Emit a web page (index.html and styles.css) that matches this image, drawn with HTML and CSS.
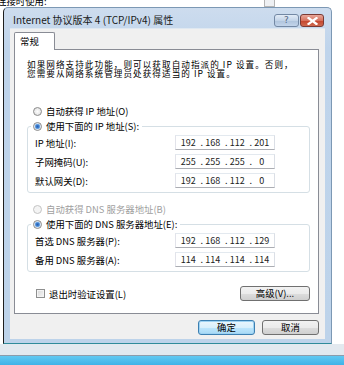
FILE: index.html
```html
<!DOCTYPE html>
<html lang="zh-CN">
<head>
    <meta charset="UTF-8">
    <meta name="viewport" content="width=device-width, initial-scale=1.0">
    <title>Internet 协议版本 4 (TCP/IPv4) 属性</title>
    <link rel="stylesheet" href="styles.css">
</head>
<body>
    <div class="desk">
        <!-- janela atrás do diálogo -->
        <span class="behind-text">连接时使用:</span>
        <span class="behind-scroll"></span>

        <div class="dialog">
            <div class="titlebar">
                <span class="title">Internet 协议版本 4 (TCP/IPv4) 属性</span>
                <div class="caption-btns">
                    <span class="cap-btn help">?</span>
                    <span class="cap-btn close">
                        <svg width="11" height="8" viewBox="0 0 11 8">
                            <path d="M1.5 1 L9.5 7 M9.5 1 L1.5 7" stroke="#fff" stroke-width="2.2" stroke-linecap="square"/>
                        </svg>
                    </span>
                </div>
            </div>

            <div class="client">
                <div class="tabs"><span class="tab">常规</span></div>

                <div class="panel">
                    <p class="intro">如果网络支持此功能，则可以获取自动指派的 IP 设置。否则，<br>您需要从网络系统管理员处获得适当的 IP 设置。</p>

                    <div class="option"><span class="radio"></span>自动获得 IP 地址(O)</div>

                    <fieldset class="group">
                        <legend><span class="radio on"></span>使用下面的 IP 地址(S):</legend>
                        <div class="field">
                            <span>IP 地址(I):</span>
                            <div class="ipbox"><span>192</span><span>168</span><span>112</span><span>201</span></div>
                        </div>
                        <div class="field">
                            <span>子网掩码(U):</span>
                            <div class="ipbox"><span>255</span><span>255</span><span>255</span><span>0</span></div>
                        </div>
                        <div class="field">
                            <span>默认网关(D):</span>
                            <div class="ipbox"><span>192</span><span>168</span><span>112</span><span>0</span></div>
                        </div>
                    </fieldset>

                    <div class="option disabled"><span class="radio off"></span>自动获得 DNS 服务器地址(B)</div>

                    <fieldset class="group dns">
                        <legend><span class="radio on"></span>使用下面的 DNS 服务器地址(E):</legend>
                        <div class="field">
                            <span>首选 DNS 服务器(P):</span>
                            <div class="ipbox"><span>192</span><span>168</span><span>112</span><span>129</span></div>
                        </div>
                        <div class="field">
                            <span>备用 DNS 服务器(A):</span>
                            <div class="ipbox"><span>114</span><span>114</span><span>114</span><span>114</span></div>
                        </div>
                    </fieldset>

                    <div class="bottom-row">
                        <label class="check"><span class="checkbox"></span>退出时验证设置(L)</label>
                        <button class="btn advanced">高级(V)...</button>
                    </div>
                </div>

                <div class="dlg-btns">
                    <button class="btn default">确定</button>
                    <button class="btn">取消</button>
                </div>
            </div>
        </div>

        <div class="strip"></div>
        <div class="taskbar"></div>
    </div>
</body>
</html>
```

FILE: styles.css
```css
body {
    margin: 0;
    font-family: "Noto Sans CJK SC", "Noto Sans", sans-serif;
    font-size: 9.4px;
    color: #000;
    background: #fff;
}

.desk {
    position: relative;
    width: 344px;
    height: 365px;
    overflow: hidden;
    background: #fff;
}

.behind-text {
    position: absolute;
    left: -3px;
    top: -4px;
    line-height: 10px;
}

.behind-scroll {
    position: absolute;
    left: 264px;
    top: 0;
    width: 9px;
    height: 6px;
    border: 1px solid #b4b4b4;
    border-top: none;
    background: #eef0f3;
}

/* janela do diálogo */
.dialog {
    position: absolute;
    left: 3px;
    top: 7px;
    width: 329px;
    height: 337px;
    box-sizing: border-box;
    border: 1px solid #7c98b4;
    border-left-color: #1e1e1e;
    border-bottom-color: #2f8b9a;
    border-radius: 5px 5px 0 0;
    background: linear-gradient(#cddcee, #bfd4eb 40px, #bdd3ea);
    display: flex;
    flex-direction: column;
}

.titlebar {
    height: 21px;
    padding: 3px 7px 0 9px;
    box-sizing: border-box;
    display: flex;
    align-items: center;
    justify-content: space-between;
}

.title {
    font-size: 10px;
    line-height: 12px;
    color: #1a1a1a;
}

.caption-btns {
    display: flex;
    gap: 1px;
    align-self: flex-start;
    margin-top: 3px;
}

.cap-btn {
    width: 25px;
    height: 13px;
    box-sizing: border-box;
    border: 1px solid #7388a4;
    border-radius: 3px;
    display: flex;
    align-items: center;
    justify-content: center;
}

.help {
    background: linear-gradient(#e2ebf6, #c3d4e8 50%, #aec3dc 51%, #c2d4ea);
    color: #52657f;
    font-family: "DejaVu Sans", sans-serif;
    font-size: 9px;
    line-height: 11px;
}

.close {
    width: 24px;
    border-color: #7a3a34;
    background: linear-gradient(#e8a79a, #d7735f 50%, #c3432c 51%, #cf6a50);
}

.client {
    margin: 0 6px 4px;
    flex: 1;
    padding: 3px 6px 4px 4px;
    background: #f0f0f0;
    border: 1px solid #dfe8f1;
    border-width: 1px 0 0;
    display: flex;
    flex-direction: column;
}

.tabs {
    display: flex;
    height: 18px;
    margin-bottom: -1px;
    position: relative;
    z-index: 1;
}

.tab {
    width: 41px;
    box-sizing: border-box;
    padding: 3px 0 0 5px;
    line-height: 11px;
    background: #fff;
    border: 1px solid #898c95;
    border-bottom: none;
    border-radius: 2px 2px 0 0;
}

.panel {
    height: 265px;
    box-sizing: border-box;
    background: #fff;
    border: 1px solid #898c95;
    padding: 10px 8px 0 12px;
}

.intro {
    margin: 0;
    font-size: 8.6px;
    line-height: 9px;
    letter-spacing: 1.05px;
}

.option {
    margin-top: 28px;
    padding-left: 6px;
    height: 10px;
    line-height: 10px;
    display: flex;
    align-items: center;
}

.option.disabled {
    margin-top: 11px;
    color: #a0a0a0;
}

.radio {
    width: 9px;
    height: 9px;
    box-sizing: border-box;
    border: 1px solid #8a8a8a;
    border-radius: 50%;
    background: radial-gradient(circle, #fdfdfd 0, #e2e2e2 4px);
    margin-right: 4px;
    flex-shrink: 0;
    display: inline-block;
}

.radio.on {
    background: radial-gradient(circle, #2a5fb0 0, #3e7fd0 1.5px, #8dbbea 2.6px, #f2f6fb 3.2px, #e4e4e4 4px);
}

.radio.off {
    border-color: #c4c4c4;
    background: #f4f4f4;
}

.group {
    margin: 5px 0 0;
    padding: 4px 34px 4px 7px;
    border: 1px solid #d5dfe5;
    border-radius: 3px;
}

.group legend {
    margin-left: -4px;
    padding: 0 3px 0 2px;
    height: 10px;
    line-height: 10px;
    display: flex;
    align-items: center;
}

.field {
    display: flex;
    justify-content: space-between;
    align-items: center;
    height: 15px;
}

.field + .field {
    margin-top: 4px;
}

.ipbox {
    width: 100px;
    height: 15px;
    box-sizing: border-box;
    border: 1px solid #abadb3;
    border-top-color: #e3e9ef;
    border-left-color: #e2e3ea;
    border-right-color: #dbdfe6;
    display: grid;
    grid-template-columns: repeat(4, 1fr);
    font-size: 9px;
    line-height: 13px;
    color: #222;
}

.ipbox span {
    text-align: center;
    position: relative;
}

.ipbox span + span::before {
    content: ".";
    position: absolute;
    left: 0;
}

.bottom-row {
    margin-top: 14px;
    display: flex;
    justify-content: space-between;
    align-items: center;
}

.check {
    display: flex;
    align-items: center;
    padding-left: 9px;
    line-height: 10px;
}

.checkbox {
    width: 9px;
    height: 9px;
    box-sizing: border-box;
    border: 1px solid #8e8f8f;
    background: linear-gradient(135deg, #d8d8d8, #f6f6f6);
    box-shadow: inset 0 0 0 1px #f4f4f4;
    margin-right: 4px;
}

.btn {
    font-family: inherit;
    font-size: 9.4px;
    color: #000;
    padding: 0;
    height: 15px;
    line-height: 13px;
    box-sizing: border-box;
    border: 1px solid #707070;
    border-radius: 3px;
    background: linear-gradient(#f2f2f2, #ebebeb 50%, #dddddd 51%, #cfcfcf);
}

.advanced {
    width: 70px;
}

.dlg-btns {
    margin-top: 6px;
    display: flex;
    justify-content: flex-end;
    gap: 7px;
}

.dlg-btns .btn {
    width: 57px;
}

.btn.default {
    border-color: #3c7fb1;
    background: linear-gradient(#eaf6fd, #d9f0fc 50%, #bee6fd 51%, #a7d9f5);
    box-shadow: inset 0 0 0 1px #9ed3f3;
}

.strip {
    position: absolute;
    left: 0;
    top: 344px;
    width: 344px;
    height: 11px;
    background: #e3e9ef;
}

.taskbar {
    position: absolute;
    left: 0;
    top: 355px;
    width: 344px;
    height: 10px;
    border-top: 1px solid #8c9cab;
    background: linear-gradient(#62c9f2, #3bb0e6);
}
```
